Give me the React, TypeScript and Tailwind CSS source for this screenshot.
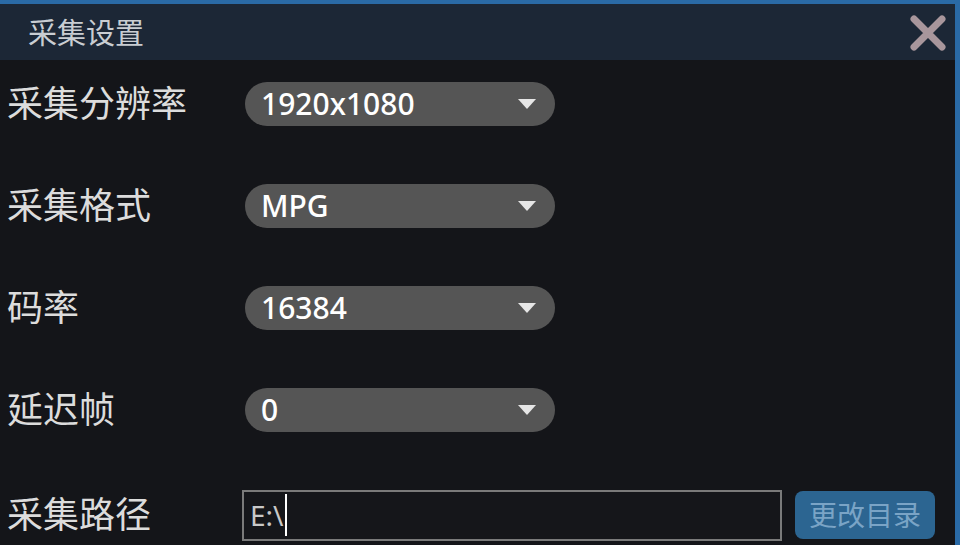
export default function App() {
  const font = { fontFamily: '"Noto Sans", "Noto Sans CJK SC", sans-serif' };

  const selects = [
    { label: "采集分辨率", value: "1920x1080" },
    { label: "采集格式", value: "MPG" },
    { label: "码率", value: "16384" },
    { label: "延迟帧", value: "0" },
  ];

  return (
    <div
      style={font}
      className="w-[960px] h-[545px] overflow-hidden bg-[#141519] border-t-4 border-r-[5px] border-[#2a6aa6] flex flex-col"
    >
      {/* title bar */}
      <div className="h-[56px] shrink-0 bg-[#1c2736] flex items-center justify-between pl-[28px] pr-[7px]">
        <span className="text-[29px] text-[#c9cdd2] leading-none">采集设置</span>
        <svg width="40" height="40" viewBox="0 0 40 40" className="mt-[2px]">
          <path d="M6 6 L34 34 M34 6 L6 34" stroke="#a8969c" strokeWidth="7" strokeLinecap="round" />
        </svg>
      </div>

      {/* body */}
      <div className="flex flex-col gap-[58px] pt-[22px]">
        {selects.map((s) => (
          <div key={s.label} className="flex items-center h-[44px]">
            <div className="w-[245px] pl-[7px] text-[36px] text-[#dcdcdc] leading-none">{s.label}</div>
            <div className="w-[310px] h-[44px] rounded-full bg-[#555555] flex items-center justify-between pl-[16px] pr-[18px]">
              <span className="text-[30px] font-medium text-white leading-none">{s.value}</span>
              <svg width="20" height="12" viewBox="0 0 20 12">
                <path d="M1 1 L19 1 L10 11 Z" fill="#e6e6e6" />
              </svg>
            </div>
          </div>
        ))}

        <div className="flex items-center h-[50px]">
          <div className="w-[242px] pl-[7px] text-[36px] text-[#dcdcdc] leading-none">采集路径</div>
          <div className="w-[540px] h-[51px] border-2 border-[#7a7a7a] bg-[#15161a] flex items-center pl-[6px]">
            <span className="text-[28px] text-[#c8c8c8] leading-none">E:\</span>
            <span className="w-[2px] h-[42px] bg-white ml-[1px]" />
          </div>
          <button className="ml-[13px] w-[140px] h-[48px] rounded-[8px] bg-[#2c6591] text-[28px] text-[#7aa4c6] leading-none flex items-center justify-center">
            更改目录
          </button>
        </div>
      </div>
    </div>
  );
}
